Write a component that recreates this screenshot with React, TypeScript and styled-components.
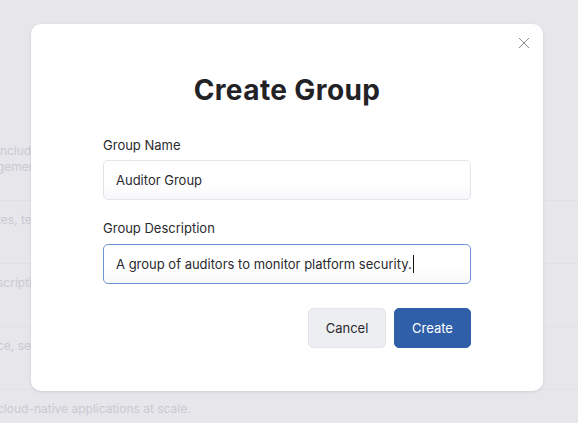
import React from "react";
import styled, { createGlobalStyle } from "styled-components";

const Global = createGlobalStyle`
  html, body { margin: 0; padding: 0; }
  body {
    width: 578px;
    height: 423px;
    overflow: hidden;
    background: #e6e6eb;
    font-family: Inter, "Open Sans", sans-serif;
  }
`;

const Page = styled.div`
  position: relative;
  width: 578px;
  height: 423px;
  overflow: hidden;
  background: #e6e6eb;
`;

const BgList = styled.div`
  display: flex;
  flex-direction: column;
  padding-top: 141px;
  margin-left: -3px;
`;

const BgRow = styled.div<{ $h: number; $first?: boolean }>`
  height: ${(p) => p.$h}px;
  border-top: ${(p) => (p.$first ? "none" : "1px solid #e1e1e6")};
  box-sizing: border-box;
  font-size: 12px;
  line-height: 16px;
  color: #cacad2;
  padding-top: ${(p) => (p.$first ? 2 : 11)}px;
  white-space: nowrap;
`;

const Overlay = styled.div`
  position: absolute;
  inset: 0;
  display: flex;
  justify-content: flex-start;
  padding: 24px 0 0 31px;
  box-sizing: border-box;
`;

const Modal = styled.div`
  position: relative;
  width: 512px;
  height: 367px;
  box-sizing: border-box;
  background: #ffffff;
  border-radius: 10px;
  box-shadow: 0 1px 3px rgba(40, 40, 70, 0.12);
  padding: 48px 72px 0 72px;
  display: flex;
  flex-direction: column;
`;

const Close = styled.button`
  position: absolute;
  top: 12px;
  right: 12px;
  width: 14px;
  height: 14px;
  padding: 0;
  border: 0;
  background: none;
  display: flex;
  align-items: center;
  justify-content: center;
`;

const Title = styled.h1`
  margin: 0 0 30px 0;
  text-align: center;
  font-size: 28px;
  line-height: 36px;
  font-weight: 700;
  color: #222226;
  letter-spacing: 0.4px;
`;

const Field = styled.div<{ $gap: number; $after: number }>`
  display: flex;
  flex-direction: column;
  gap: ${(p) => p.$gap}px;
  margin-bottom: ${(p) => p.$after}px;
`;

const Label = styled.label`
  font-size: 13px;
  line-height: 15px;
  color: #2a2a2e;
`;

const Input = styled.div<{ $focus?: boolean }>`
  height: 40px;
  box-sizing: border-box;
  border: 1px solid ${(p) => (p.$focus ? "#6e93d6" : "#e4e4ea")};
  border-radius: 5px;
  padding: 0 12px;
  display: flex;
  align-items: center;
  font-size: 13px;
  color: #2a2a2e;
  background: linear-gradient(#ffffff 60%, #f8f8fa);
`;

const Caret = styled.span`
  display: inline-block;
  width: 1px;
  height: 18px;
  background: #111;
  margin-left: 1px;
`;

const Actions = styled.div`
  display: flex;
  justify-content: flex-end;
  gap: 8px;
`;

const Btn = styled.button<{ $primary?: boolean }>`
  height: 40px;
  padding: 0 16px;
  box-sizing: border-box;
  border-radius: 5px;
  font-family: inherit;
  font-size: 13px;
  border: 1px solid ${(p) => (p.$primary ? "#2f5fa8" : "#e2e5ea")};
  background: ${(p) => (p.$primary ? "#2f5fa8" : "#eceef2")};
  color: ${(p) => (p.$primary ? "#ffffff" : "#2a2a2e")};
  min-width: ${(p) => (p.$primary ? "77px" : "78px")};
`;

export default function App() {
  return (
    <>
      <Global />
      <Page>
        <BgList>
          <BgRow $h={59} $first>
            includ
            <br />
            gemen
          </BgRow>
          <BgRow $h={63}>tes, te</BgRow>
          <BgRow $h={63}>scripti</BgRow>
          <BgRow $h={63}>ce, se</BgRow>
          <BgRow $h={40}>cloud-native applications at scale.</BgRow>
        </BgList>
        <Overlay>
          <Modal>
            <Close aria-label="Close">
              <svg width="12" height="12" viewBox="0 0 12 12">
                <path d="M1 1L11 11M11 1L1 11" stroke="#8a8a90" strokeWidth="1" fill="none" />
              </svg>
            </Close>
            <Title>Create Group</Title>
            <Field $gap={7} $after={21}>
              <Label>Group Name</Label>
              <Input>Auditor Group</Input>
            </Field>
            <Field $gap={8} $after={24}>
              <Label>Group Description</Label>
              <Input $focus>
                A group of auditors to monitor platform security.
                <Caret />
              </Input>
            </Field>
            <Actions>
              <Btn>Cancel</Btn>
              <Btn $primary>Create</Btn>
            </Actions>
          </Modal>
        </Overlay>
      </Page>
    </>
  );
}
